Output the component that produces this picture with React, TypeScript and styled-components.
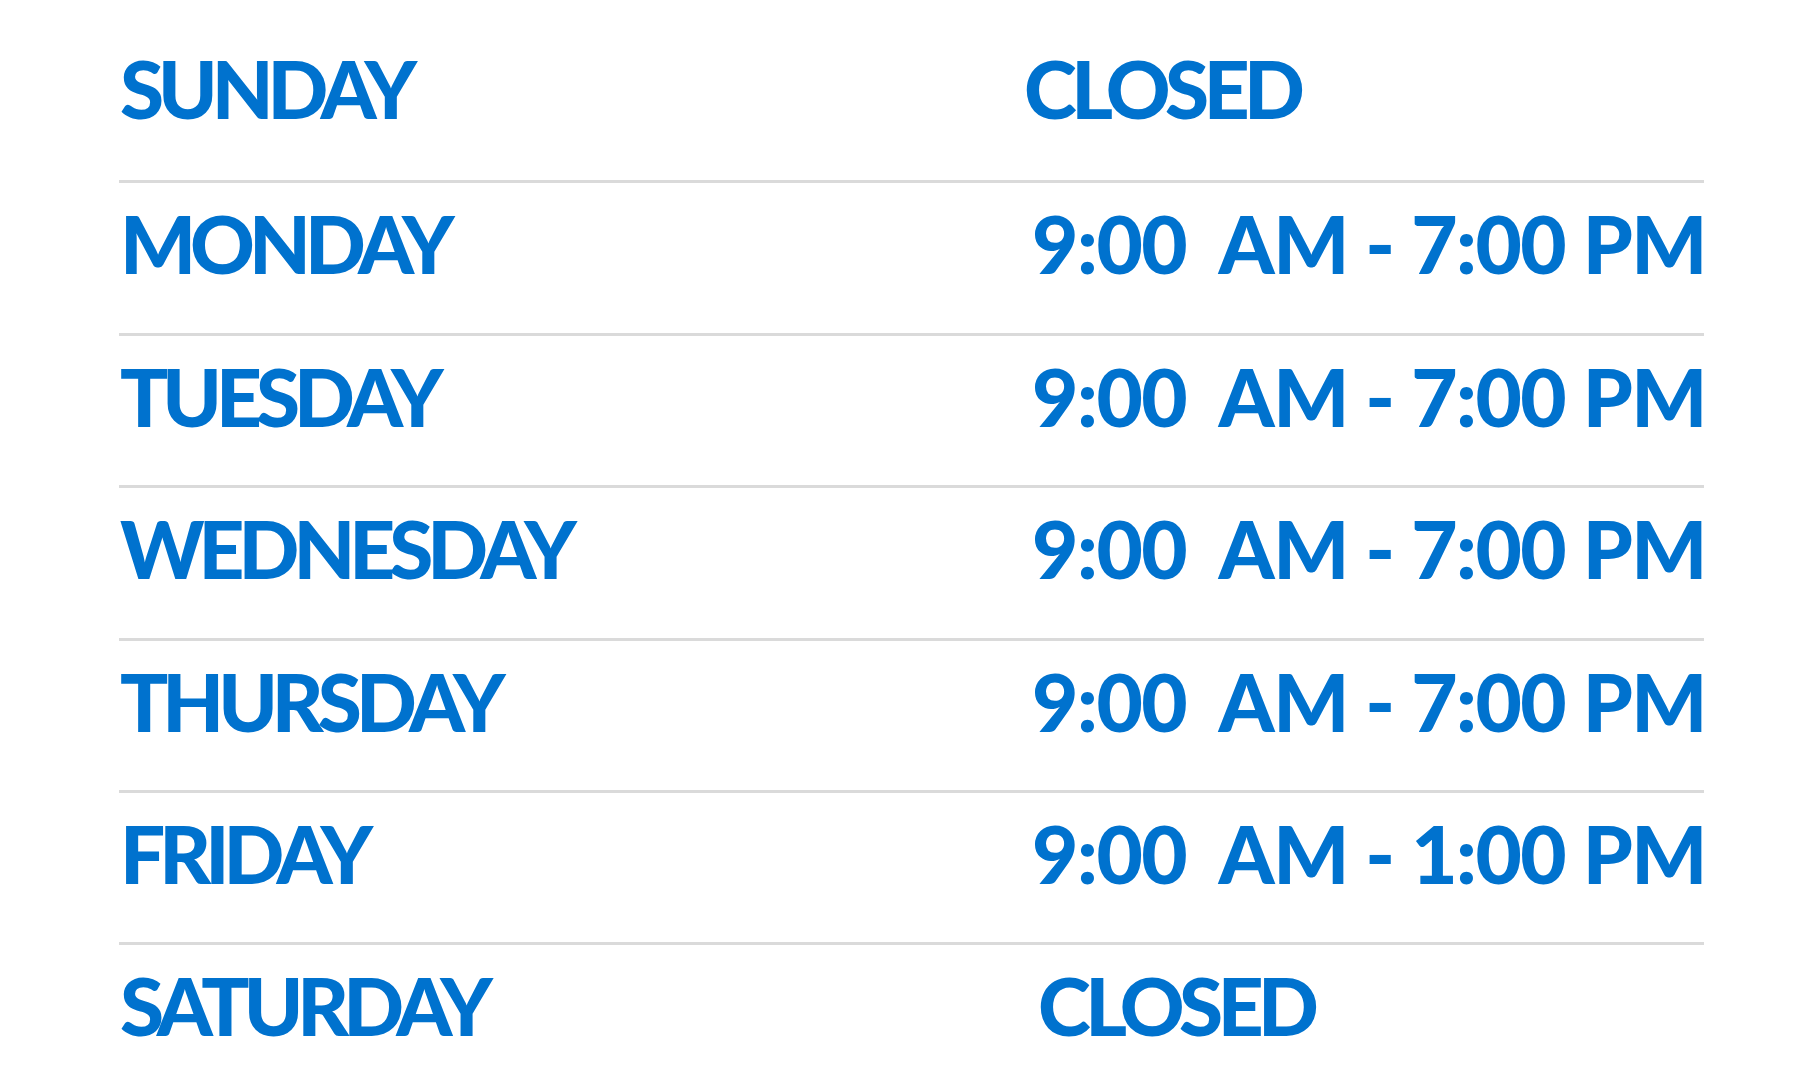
import React from 'react';
import styled, { createGlobalStyle } from 'styled-components';

const GlobalStyle = createGlobalStyle`
  html, body {
    margin: 0;
    padding: 0;
    background: #ffffff;
  }
`;

const Page = styled.main`
  width: 1800px;
  height: 1080px;
  box-sizing: border-box;
  padding: 28px 96px 0 119px;
  background: #ffffff;
  font-family: Lato, 'Liberation Sans', sans-serif;
  color: #0072ce;
  overflow: hidden;
`;

const Schedule = styled.div`
  display: flex;
  flex-direction: column;
`;

const Row = styled.div<{ $first?: boolean }>`
  display: grid;
  grid-template-columns: 905px 1fr;
  align-items: start;
  height: 152.4px;
  box-sizing: border-box;
  padding-top: 20px;
  border-top: ${(p) => (p.$first ? 'none' : '3px solid #dadada')};
`;

const Day = styled.div`
  font-size: 80px;
  font-weight: 900;
  line-height: 1;
  letter-spacing: -6px;
  padding-left: 1px;
  white-space: nowrap;
`;

const Hours = styled.div<{ $closed?: boolean; $offset?: number }>`
  font-size: 80px;
  font-weight: 900;
  line-height: 1;
  letter-spacing: ${(p) => (p.$closed ? '-5.5px' : '-1.5px')};
  white-space: pre;
  justify-self: ${(p) => (p.$closed ? 'start' : 'end')};
  margin-left: ${(p) => p.$offset ?? 0}px;
  margin-right: ${(p) => (p.$closed ? 0 : -2)}px;
`;

const hours = [
  { day: 'SUNDAY', time: 'CLOSED', closed: true, offset: 0 },
  { day: 'MONDAY', time: '9:00  AM - 7:00 PM' },
  { day: 'TUESDAY', time: '9:00  AM - 7:00 PM' },
  { day: 'WEDNESDAY', time: '9:00  AM - 7:00 PM' },
  { day: 'THURSDAY', time: '9:00  AM - 7:00 PM' },
  { day: 'FRIDAY', time: '9:00  AM - 1:00 PM' },
  { day: 'SATURDAY', time: 'CLOSED', closed: true, offset: 14 },
];

function App() {
  return (
    <>
      <GlobalStyle />
      <Page>
        <Schedule>
          {hours.map((h, i) => (
            <Row key={h.day} $first={i === 0}>
              <Day>{h.day}</Day>
              <Hours $closed={h.closed} $offset={h.offset}>
                {h.time}
              </Hours>
            </Row>
          ))}
        </Schedule>
      </Page>
    </>
  );
}

export default App;
